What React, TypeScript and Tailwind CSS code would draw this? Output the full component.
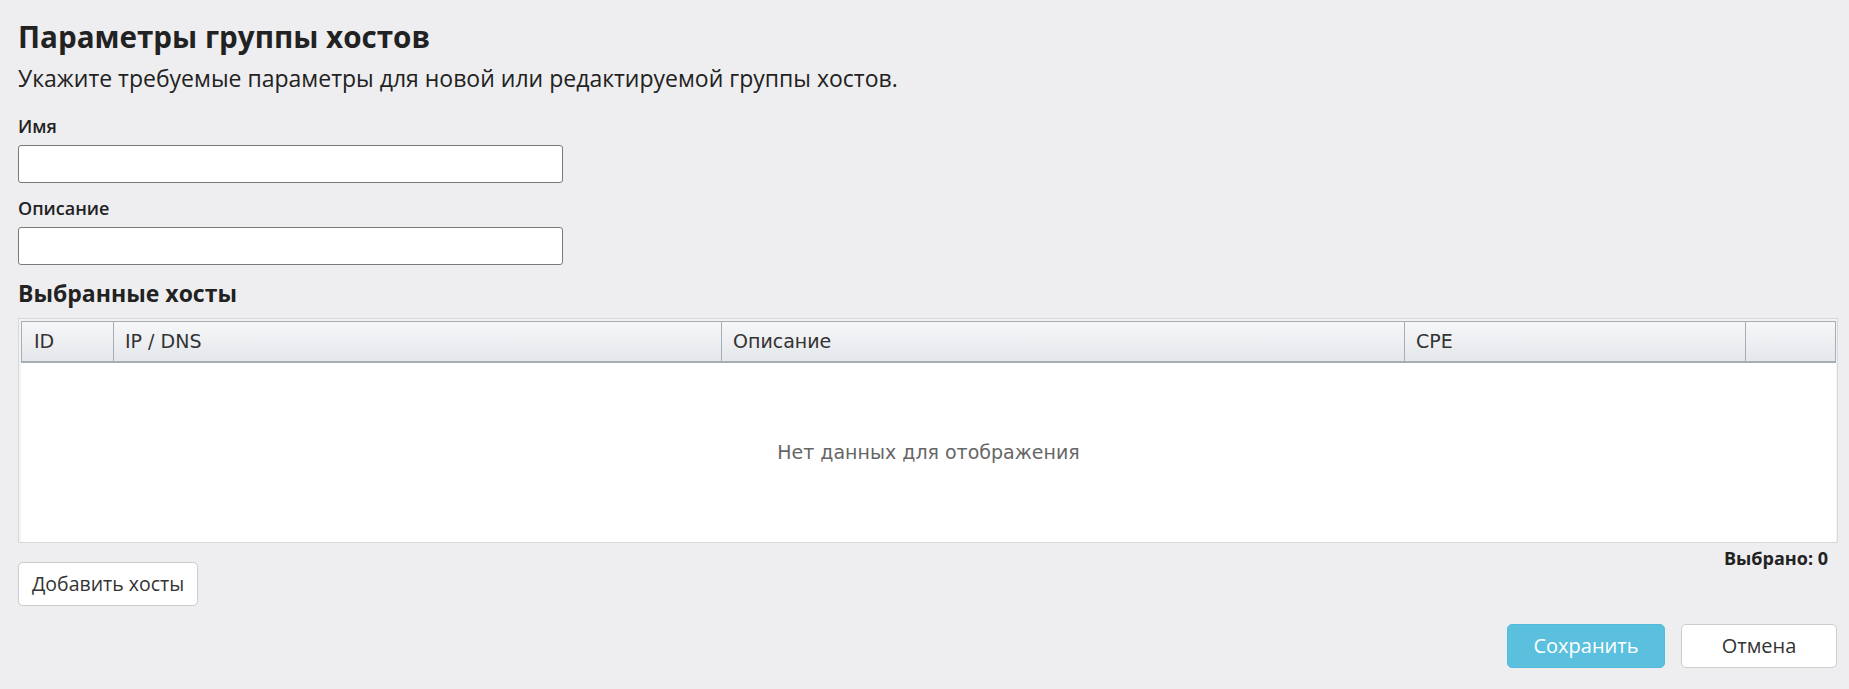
const columns = ["ID", "IP / DNS", "Описание", "CPE", ""];

const Field = ({ label, first }: { label: string; first?: boolean }) => (
  <div className={first ? "mt-[22px]" : "mt-[13px]"}>
    <label className="block text-[18px] leading-[24px] font-semibold text-[#222]">
      {label}
    </label>
    <input
      type="text"
      className="mt-[7px] block w-[545px] h-[38px] bg-white border border-[#7a7a7a] rounded-[3px] px-2 outline-none"
    />
  </div>
);

const App = () => {
  return (
    <div
      className="min-h-screen bg-[#eeeef0] pl-[18px] pr-[11px] text-[#222]"
      style={{ fontFamily: '"Open Sans", "Noto Sans", sans-serif' }}
    >
      <h1 className="pt-[19px] text-[29.6px] leading-[35px] font-bold">
        Параметры группы хостов
      </h1>
      <p className="mt-[10px] text-[23px] leading-[28px]">
        Укажите требуемые параметры для новой или редактируемой группы хостов.
      </p>

      <Field label="Имя" first />
      <Field label="Описание" />

      <h2 className="mt-[14px] text-[23px] leading-[29px] font-bold">
        Выбранные хосты
      </h2>

      {/* hosts grid */}
      <div className="mt-[10px] border border-[#d9d9d9] bg-[#f3f3f4] pt-[2px] pl-[2px] pr-px">
        <div
          className="grid grid-cols-[91px_608px_683px_341px_1fr] h-[42px] border-t border-b-2 border-l border-r border-[#a7adb5] bg-linear-to-b from-[#f6f7f9] to-[#e4e7eb] text-[19px] leading-[39px] text-[#333]"
          style={{ fontFamily: '"DejaVu Sans", sans-serif' }}
        >
          {columns.map((col, i) => (
            <div
              key={i}
              className={
                i === 0
                  ? "pl-[12px]"
                  : "pl-[11px] border-l border-[#a7adb5]"
              }
            >
              {col}
            </div>
          ))}
        </div>
        <div
          className="h-[179px] bg-white flex items-center justify-center text-[19px] text-[#666]"
          style={{ fontFamily: '"DejaVu Sans", sans-serif' }}
        >
          Нет данных для отображения
        </div>
      </div>

      <div className="flex items-start justify-between">
        <button className="mt-[19px] h-[44px] w-[180px] whitespace-nowrap text-left px-[13px] bg-white border border-[#cccccc] rounded-[5px] text-[19.5px] text-[#333]">
          Добавить хосты
        </button>
        <div className="mt-[5px] pr-[10px] text-[18px] leading-[20px] font-bold">
          Выбрано: 0
        </div>
      </div>

      <div className="mt-[18px] flex justify-end gap-[16px] pr-px">
        <button className="h-[44px] w-[158px] bg-[#5bc0de] border border-[#52bbdb] rounded-[5px] text-[20px] text-white">
          Сохранить
        </button>
        <button className="h-[44px] w-[156px] bg-white border border-[#cccccc] rounded-[5px] text-[20px] text-[#333]">
          Отмена
        </button>
      </div>
    </div>
  );
};

export default App;
